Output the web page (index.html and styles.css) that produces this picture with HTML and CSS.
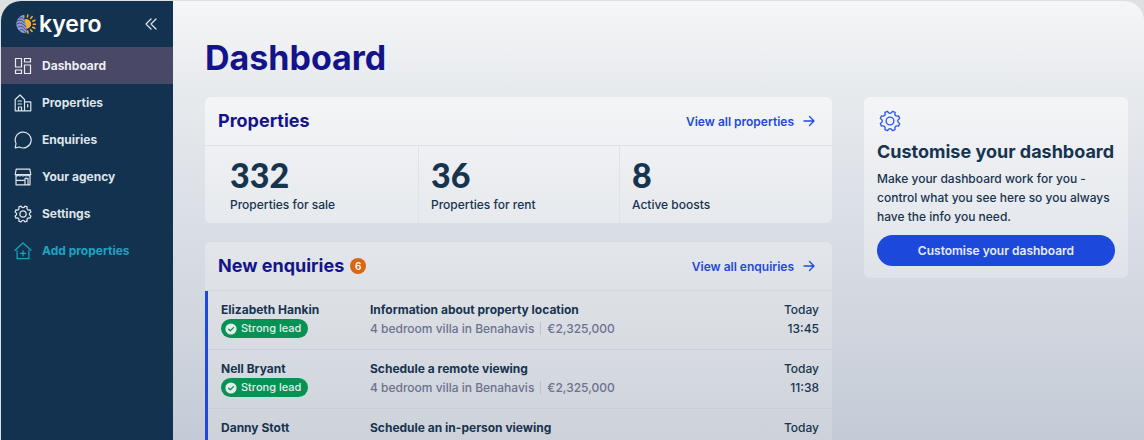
FILE: index.html
```html
<!DOCTYPE html>
<html lang="en">
<head>
<meta charset="utf-8">
<title>Kyero dashboard</title>
<link rel="stylesheet" href="styles.css">
</head>
<body>
<svg class="sprite" aria-hidden="true">
  <symbol id="gear" viewBox="0 0 24 24"><path d="M14.73 1.45L17.53 2.61Q16.38 7.62 21.39 6.47L22.55 9.27Q18.2 12 22.55 14.73L21.39 17.53Q16.38 16.38 17.53 21.39L14.73 22.55Q12 18.2 9.27 22.55L6.47 21.39Q7.62 16.38 2.61 17.53L1.45 14.73Q5.8 12 1.45 9.27L2.61 6.47Q7.62 7.62 6.47 2.61L9.27 1.45Q12 5.8 14.73 1.45Z"/><circle cx="12" cy="12" r="4.2"/></symbol>
  <symbol id="arrow" viewBox="0 0 12 12"><path d="M1 6H11M6.5 1.5L11 6L6.5 10.5"/></symbol>
  <symbol id="tick" viewBox="0 0 12 12"><circle cx="6" cy="6" r="5.6" fill="#e3ede9" stroke="none"/><path d="M3.6 6.2L5.3 7.8L8.5 4.6"/></symbol>
</svg>
<div class="app">
  <aside class="sidebar">
    <div class="brand">
      <a class="logo" href="#">
        <svg class="logo-mark" viewBox="0 0 20 20" aria-hidden="true">
          <path d="M8 5.4A5 5 0 1 1 10.5 14.9Z" fill="#f6ae2d"/>
          <path d="M8.2 .8A9.3 9.3 0 0 0 9.5 19.3C12.2 17.5 9.6 15 10.4 12.6C11 10.5 8.6 9 8 6.5C7.6 4.5 9.4 3 8.2 .8Z" fill="#9298d2"/>
          <path d="M1 7.2C4 5 6.5 6.6 8.4 9M.8 10.2C4 7.8 7 9.6 9.8 12.6M1.6 13.4C4 11 7 12.4 9.8 15.6M3.6 16.2C5.5 14.5 7.5 15.5 9 18.4M3.6 4.2C5.4 3 7 3.8 8 5.4" fill="none" stroke="#13324f" stroke-width=".7"/>
          <path d="M11.4 3.1L11.8 .9M14.6 4.4L16.2 2.5M16.8 7.2L19 6.2M17.3 10.3H19.4M16.7 13.2L18.8 14.2M14.6 15.7L16.1 17.5M11.7 17L12 19.1" stroke="#f6ae2d" stroke-width="1.5" stroke-linecap="round"/>
        </svg>
        <span>kyero</span>
      </a>
      <button class="collapse" type="button" aria-label="Collapse menu"><svg viewBox="0 0 12 12"><path d="M6 1L1 6L6 11M11 1L6 6L11 11"/></svg></button>
    </div>
    <nav class="nav">
      <a class="nav-item active" href="#"><svg viewBox="0 0 18 18"><path d="M1.5 1.5H7.5V10H1.5ZM1.5 13H7.5V16.5H1.5ZM10.5 1.5H16.5V5H10.5ZM10.5 8H16.5V16.5H10.5Z"/></svg>Dashboard</a>
      <a class="nav-item" href="#"><svg viewBox="0 0 18 18"><path d="M1.2 16.8V5.5L6 1L10.5 5.5V16.8ZM10.5 7.8H16.8V16.8H10.5M4 7H7.5M4 10H7.5M4.5 16.5V13H7.5V16.5M13.7 10.5V13"/></svg>Properties</a>
      <a class="nav-item" href="#"><svg viewBox="0 0 18 18"><path d="M1.2 16.8L2 12.5A8 7.9 0 1 1 5.4 16Z"/></svg>Enquiries</a>
      <a class="nav-item" href="#"><svg viewBox="0 0 18 18"><path d="M2.2 1.2H15.8L16.8 6.5H1.2ZM1.2 6.5Q2.7 9 4.3 6.8Q5.9 9 7.4 6.8Q9 9 10.6 6.8Q12.1 9 13.7 6.8Q15.3 9 16.8 6.5M2 8.2V16.8H16V8.2M2 12.3H11M11 16.8V10.3H14V16.8"/></svg>Your agency</a>
      <a class="nav-item" href="#"><svg class="nav-gear"><use href="#gear"/></svg>Settings</a>
      <a class="nav-item add" href="#"><svg viewBox="0 0 18 18"><path d="M1 8.3L9 1L17 8.3M3.1 8.5V16.7H14.9V8.5M9 8.8V13.8M6.5 11.3H11.5"/></svg>Add properties</a>
    </nav>
  </aside>
  <main class="main">
    <h1>Dashboard</h1>
    <div class="columns">
      <div class="feed">
        <section class="card properties">
          <header class="card-head"><h2>Properties</h2><a class="more" href="#">View all properties <svg><use href="#arrow"/></svg></a></header>
          <div class="stats">
            <div class="stat"><strong>332</strong><span>Properties for sale</span></div>
            <div class="stat"><strong>36</strong><span>Properties for rent</span></div>
            <div class="stat"><strong>8</strong><span>Active boosts</span></div>
          </div>
        </section>
        <section class="card enquiries">
          <header class="card-head"><h2>New enquiries</h2><span class="count">6</span><a class="more" href="#">View all enquiries <svg><use href="#arrow"/></svg></a></header>
          <ul class="rows">
            <li class="row">
              <div><b>Elizabeth Hankin</b><span class="lead"><svg><use href="#tick"/></svg>Strong lead</span></div>
              <div><b>Information about property location</b><p class="detail"><span>4 bedroom villa in Benahavis</span><span>€2,325,000</span></p></div>
              <div class="when"><span>Today</span><time>13:45</time></div>
            </li>
            <li class="row">
              <div><b>Nell Bryant</b><span class="lead"><svg><use href="#tick"/></svg>Strong lead</span></div>
              <div><b>Schedule a remote viewing</b><p class="detail"><span>4 bedroom villa in Benahavis</span><span>€2,325,000</span></p></div>
              <div class="when"><span>Today</span><time>11:38</time></div>
            </li>
            <li class="row">
              <div><b>Danny Stott</b></div>
              <div><b>Schedule an in-person viewing</b></div>
              <div class="when"><span>Today</span></div>
            </li>
          </ul>
        </section>
      </div>
      <section class="card customise">
        <svg class="gear"><use href="#gear"/></svg>
        <h2>Customise your dashboard</h2>
        <p>Make your dashboard work for you - control what you see here so you always have the info you need.</p>
        <button class="primary" type="button">Customise your dashboard</button>
      </section>
    </div>
  </main>
</div>
</body>
</html>
```
FILE: styles.css
```css
* { box-sizing: border-box; margin: 0; }
body {
  background: #dfe0e0;
  color: #17344f;
  font: 500 12px/19px Inter, "Liberation Sans", sans-serif;
}
a { color: inherit; text-decoration: none; }
button { border: 0; padding: 0; font: inherit; cursor: pointer; }
svg { flex: none; fill: none; stroke: currentColor; stroke-linecap: round; stroke-linejoin: round; }
.sprite { display: none; }

.app {
  display: flex;
  height: 100vh;
  padding: 1px 0 0 1px;
  overflow: hidden;
}

.sidebar {
  flex: none;
  width: 172px;
  background: #13324f;
  color: #dfe4e9;
  border-top-left-radius: 20px;
}
.brand {
  display: flex;
  align-items: center;
  justify-content: space-between;
  height: 46px;
  padding: 0 16px 0 15px;
}
.logo { display: flex; align-items: center; gap: 3px; color: #fff; font-size: 23px; line-height: 28px; font-weight: 600; }
.logo-mark { width: 20px; height: 20px; stroke: none; }
.collapse { display: flex; background: none; color: #dfe4e9; }
.collapse svg { width: 12px; height: 12px; stroke-width: 1.3; }
.nav-item {
  display: flex;
  align-items: center;
  gap: 10px;
  height: 37px;
  padding-left: 13px;
  font-weight: 700;
}
.nav-item svg { width: 18px; height: 18px; stroke-width: 1.2; }
.nav-item .nav-gear { stroke-width: 1.7; }
.nav-item.active { background: #4a4867; color: #eceef2; }
.nav-item.add { color: #1ca5c3; }

.main {
  flex: 1;
  min-width: 0;
  padding: 35px 16px 0 32px;
  background: linear-gradient(#f5f6f8, #e7eaed 90px, #dadee6 220px, #d2d7df 310px, #c4cbd6);
  border-top-right-radius: 20px;
}
h1 { color: #14148a; font-size: 34px; line-height: 44px; font-weight: 700; }
.columns {
  display: grid;
  grid-template-columns: minmax(0, 1fr) 264px;
  gap: 32px;
  align-items: start;
  margin-top: 17px;
}
.feed { display: grid; gap: 19px; }
.card { border-radius: 6px; overflow: hidden; }
.card h2 { font-size: 18px; line-height: 24px; font-weight: 700; }
.card-head {
  display: flex;
  align-items: center;
  gap: 6px;
  height: 49px;
  padding: 0 17px 0 13px;
  border-bottom: 1px solid #dfe2e7;
}
.card-head h2 { color: #14148a; }
.more { display: flex; align-items: center; gap: 9px; margin-left: auto; color: #1e49dc; font-weight: 600; }
.more svg { width: 12px; height: 12px; stroke-width: 1.3; }

.properties { background: linear-gradient(#f4f5f7, #e6e9ed); }
.stats { display: grid; grid-template-columns: repeat(3, 1fr); padding: 0 12px; }
.stat { display: grid; padding: 9px 0 9px 13px; }
.stat + .stat { border-left: 1px solid #dfe2e7; padding-left: 12px; }
.stat strong { font: 900 34px/40px Lato, sans-serif; }

.enquiries { background: linear-gradient(#e3e6eb, #dce0e5 60px, #cdd2da 200px); }
.enquiries .card-head { border-color: #d4d8de; }
.count {
  width: 16px;
  border-radius: 50%;
  background: #dc650f;
  color: #fff;
  font-size: 10px;
  line-height: 16px;
  font-weight: 600;
  text-align: center;
}
.rows { padding: 0; list-style: none; border-left: 3px solid #1e49dc; }
.row {
  display: grid;
  grid-template-columns: 149px 1fr auto;
  min-height: 59px;
  padding: 9px 13px 10px;
  border-bottom: 1px solid #c8cdd6;
}
.row b { display: block; font-weight: 700; }
.lead {
  display: flex;
  align-items: center;
  gap: 4px;
  width: fit-content;
  padding: 0 7px 0 4px;
  border-radius: 10px;
  background: #069255;
  color: #e3ede9;
  font-size: 11px;
}
.lead svg { width: 12px; height: 12px; color: #069255; stroke-width: 1.3; }
.detail { display: flex; align-items: center; color: #6d7190; }
.detail span + span { margin-left: 6px; padding-left: 6px; border-left: 1px solid #bbc0cc; line-height: 13px; }
.when { display: grid; align-content: start; text-align: right; }

.customise {
  display: grid;
  justify-items: start;
  padding: 13px 13px 12px;
  background: linear-gradient(#f4f5f7, #e7eaee 110px, #dfe2e8);
}
.gear { width: 22px; height: 22px; margin: 0 2px 2px; color: #2f5ae6; stroke-width: 1.5; }
.customise h2 { margin: 6px 0 5px; white-space: nowrap; }
.primary {
  width: 100%;
  height: 31px;
  margin-top: 9px;
  border-radius: 16px;
  background: #1c49dc;
  color: #e6ebfb;
  font-weight: 600;
}
```
